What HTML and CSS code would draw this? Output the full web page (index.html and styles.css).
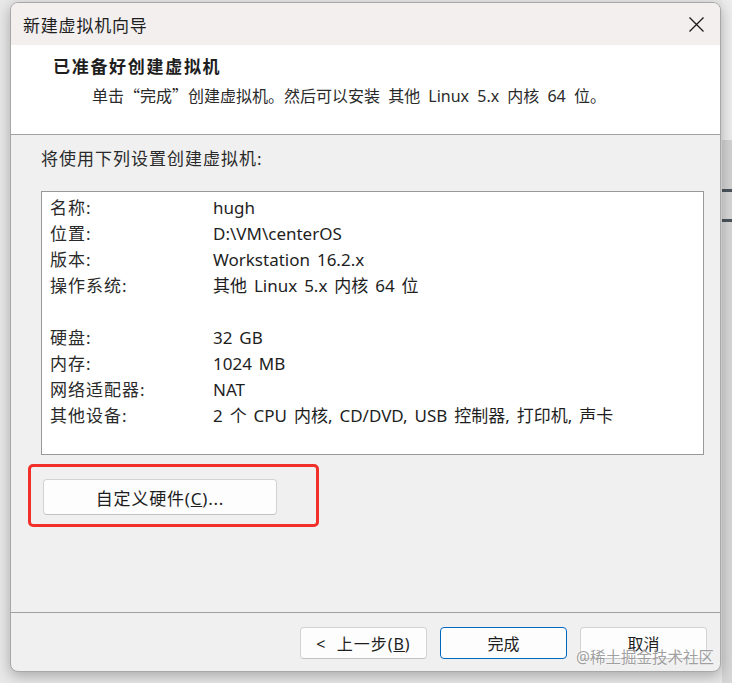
FILE: index.html
```html
<!DOCTYPE html>
<html lang="zh-CN">
<head>
    <meta charset="UTF-8">
    <title>新建虚拟机向导</title>
    <link rel="stylesheet" href="styles.css">
</head>
<body>
<div class="dialog">
    <div class="title-bar">
        <span class="title">新建虚拟机向导</span>
        <svg class="close" width="15" height="15" viewBox="0 0 15 15">
            <path d="M0.5 0.5 L14.5 14.5 M14.5 0.5 L0.5 14.5" stroke="#1a1a1a" stroke-width="1.3" fill="none"/>
        </svg>
    </div>
    <div class="header">
        <div class="heading">已准备好创建虚拟机</div>
        <!--引号用中文字体，保持全角宽度-->
        <div class="sub"><span class="zh">单击“完成”创建虚拟机。然后可以安装</span> 其他 Linux 5.x 内核 64 位。</div>
    </div>
    <div class="content">
        <div class="intro">将使用下列设置创建虚拟机:</div>
        <div class="summary">
            <div class="row"><span class="key">名称:</span><span>hugh</span></div>
            <div class="row"><span class="key">位置:</span><span>D:\VM\centerOS</span></div>
            <div class="row"><span class="key">版本:</span><span>Workstation 16.2.x</span></div>
            <div class="row"><span class="key">操作系统:</span><span>其他 Linux 5.x 内核 64 位</span></div>
            <div class="row"></div>
            <div class="row"><span class="key">硬盘:</span><span>32 GB</span></div>
            <div class="row"><span class="key">内存:</span><span>1024 MB</span></div>
            <div class="row"><span class="key">网络适配器:</span><span>NAT</span></div>
            <div class="row"><span class="key">其他设备:</span><span>2 个 CPU 内核, CD/DVD, USB 控制器, 打印机, 声卡</span></div>
        </div>
        <div class="mark">
            <button class="btn btn-custom">自定义硬件(<u>C</u>)...</button>
        </div>
    </div>
    <div class="footer">
        <button class="btn btn-back">&lt; 上一步(<u>B</u>)</button>
        <button class="btn btn-primary">完成</button>
        <button class="btn">取消</button>
    </div>
</div>
<div class="watermark">@稀土掘金技术社区</div>
</body>
</html>
```

FILE: styles.css
```css
* {
    margin: 0;
    padding: 0;
    box-sizing: border-box;
}

body {
    width: 732px;
    height: 683px;
    overflow: hidden;
    /*对话框后面的窗口，右侧露出一条*/
    background:
        linear-gradient(to bottom, #ececec 0, #ececec 140px, #d2d2d2 140px, #d2d2d2 189px,
            #4b545c 189px, #4b545c 192px, #d6d6d6 192px, #d6d6d6 219px,
            #4b545c 219px, #4b545c 222px, #d6d6d6 222px) 722px 0 / 10px 100% no-repeat,
        #e8e8e8;
    font-family: "Noto Sans", "Noto Sans CJK SC", sans-serif;
    color: #1e1e1e;
    padding: 2px 0 0 10px;
}

.zh {
    font-family: "Noto Sans CJK SC", sans-serif;
}

.dialog {
    width: 711px;
    height: 670px;
    border: 1px solid #a8a8a8;
    border-radius: 8px;
    overflow: hidden;
    background: #f0f0f0;
    box-shadow: 0 4px 14px rgba(0, 0, 0, 0.28);
}

.title-bar {
    height: 42px;
    display: flex;
    align-items: center;
    justify-content: space-between;
    padding: 0 16px 0 12px;
    background: #f3efef;
}

.title {
    font-size: 17px;
    letter-spacing: 0.8px;
}

.header {
    height: 90px;
    background: #fff;
    border-bottom: 1px solid #a0a0a0;
    padding-top: 10px;
}

.heading {
    padding-left: 42px;
    font-size: 17px;
    font-weight: bold;
    letter-spacing: 1.7px;
    line-height: 24px;
}

.sub {
    margin-top: 4px;
    padding-left: 81px;
    font-size: 16px;
    line-height: 24px;
    word-spacing: 4px;
    color: #2a2a2a;
}

.content {
    height: 477px;
    padding: 12px 16px 0 30px;
}

.intro {
    font-size: 17px;
    line-height: 24px;
    letter-spacing: 1px;
    color: #2a2a2a;
}

.summary {
    margin-top: 20px;
    height: 264px;
    background: #fff;
    border: 1px solid #999;
    padding: 3px 0 0 8px;
    font-size: 17px;
    word-spacing: 2.5px;
}

.row {
    display: flex;
    height: 26px;
    line-height: 26px;
}

.key {
    width: 163px;
    letter-spacing: 1px;
    color: #2a2a2a;
}

.mark {
    display: inline-block;
    margin: 9px 0 0 -13px;
    padding: 12px 39px 9px 12px;
    border: 3px solid #f2302a;
    border-radius: 5px;
}

.btn {
    width: 127px;
    height: 32px;
    font-family: "Noto Sans", "Noto Sans CJK SC", sans-serif;
    font-size: 16px;
    color: #1e1e1e;
    background: #fdfdfd;
    border: 1px solid #d3d3d3;
    border-bottom-color: #c2c2c2;
    border-radius: 4px;
}

.btn-custom {
    display: block;
    width: 234px;
    height: 36px;
    font-size: 17px;
    letter-spacing: 0.8px;
}

.btn-back {
    letter-spacing: 1px;
    word-spacing: 5px;
}

.btn-primary {
    border: 1px solid #0067c0;
}

.footer {
    height: 59px;
    border-top: 1px solid #a0a0a0;
    display: flex;
    justify-content: flex-end;
    gap: 13px;
    padding: 14px 13px 0 0;
}

.watermark {
    position: absolute;
    left: 576px;
    top: 645px;
    font-size: 15.5px;
    color: rgba(130, 130, 130, 0.75);
    text-shadow: 0 0 2px #fff;
}
```
